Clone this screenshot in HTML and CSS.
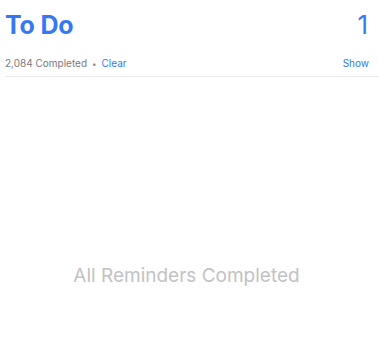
FILE: index.html
```html
<!DOCTYPE html>
<html>
<head>
<meta charset="utf-8">
<link rel="stylesheet" href="styles.css">
</head>
<body>
<div class="page">
  <header class="header">
    <div class="title-row">
      <h1 class="title">To Do</h1>
      <span class="count">1</span>
    </div>
    <div class="sub-row">
      <div class="sub-left">
        <span class="completed">2,084 Completed</span>
        <span class="dot">•</span>
        <span class="link">Clear</span>
      </div>
      <span class="link">Show</span>
    </div>
  </header>
  <main class="empty">
    <span class="empty-text">All Reminders Completed</span>
  </main>
</div>
</body>
</html>
```

FILE: styles.css
```css
html, body {
  margin: 0;
  padding: 0;
  background: #ffffff;
  font-family: Inter, "Liberation Sans", sans-serif;
}
.page {
  width: 379px;
  height: 350px;
  display: flex;
  flex-direction: column;
}
.header {
  padding: 12px 0 0 5px;
}
.title-row {
  display: flex;
  justify-content: space-between;
  align-items: baseline;
  padding-right: 11px;
}
.title {
  margin: 0;
  font-size: 25px;
  line-height: 25px;
  font-weight: 700;
  color: #3478f6;
  letter-spacing: -0.2px;
}
.count {
  font-size: 26px;
  line-height: 25px;
  font-weight: 400;
  color: #3478f6;
}
.sub-row {
  display: flex;
  justify-content: space-between;
  align-items: baseline;
  margin-top: 18px;
  padding-right: 10px;
  padding-bottom: 5px;
  border-bottom: 1px solid #ececec;
  font-size: 10px;
  line-height: 14px;
}
.sub-left {
  display: flex;
  align-items: baseline;
  gap: 5px;
}
.completed {
  color: #7a7a7a;
}
.dot {
  color: #8a8a8a;
  font-size: 8px;
}
.link {
  color: #3478f6;
}
.empty {
  flex: 1;
  display: flex;
  justify-content: center;
  padding-top: 187px;
  padding-right: 6px;
}
.empty-text {
  font-size: 19px;
  line-height: 24px;
  color: #c2c2c2;
}
```
